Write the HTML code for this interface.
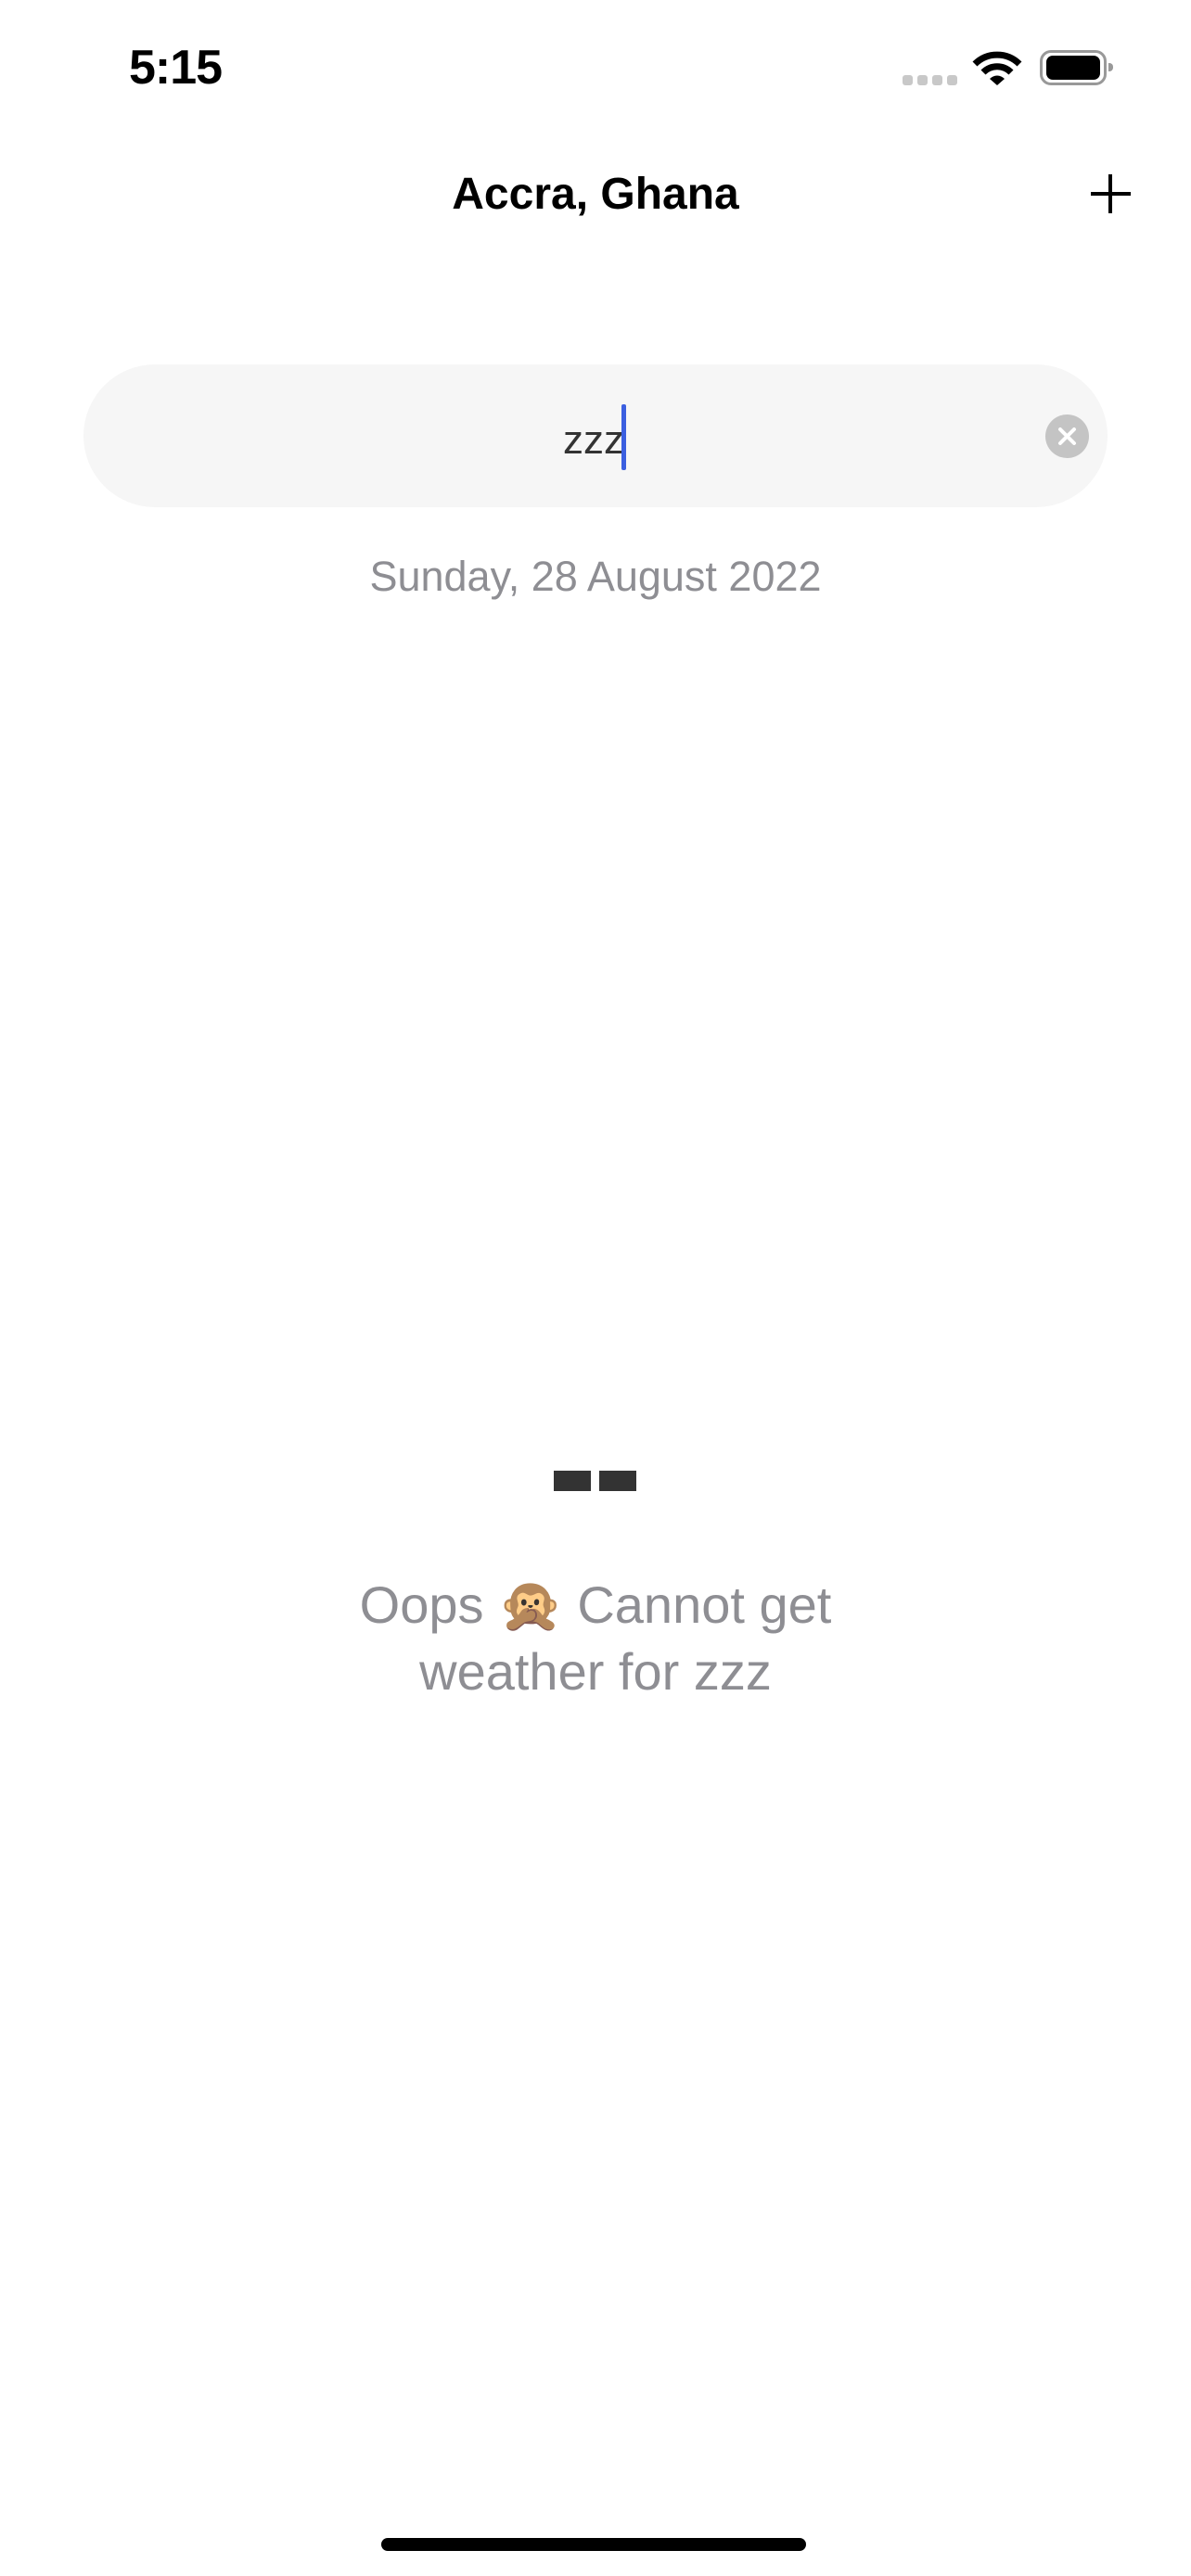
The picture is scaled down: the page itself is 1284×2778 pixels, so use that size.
<!DOCTYPE html>
<html><head><meta charset="utf-8"><style>
html,body{margin:0;padding:0;background:#fff;}
body{width:1284px;height:2778px;position:relative;overflow:hidden;font-family:"Liberation Sans",sans-serif;}
.a{position:absolute;}
</style></head><body>
<div class="a" style="left:139px;top:43px;font-size:52px;font-weight:bold;color:#000;letter-spacing:-1px;">5:15</div>
<div class="a" style="left:973px;top:81px;width:11px;height:11px;border-radius:3px;background:#c8c8c8"></div>
<div class="a" style="left:989px;top:81px;width:11px;height:11px;border-radius:3px;background:#c8c8c8"></div>
<div class="a" style="left:1005px;top:81px;width:11px;height:11px;border-radius:3px;background:#c8c8c8"></div>
<div class="a" style="left:1021px;top:81px;width:11px;height:11px;border-radius:3px;background:#c8c8c8"></div>
<svg class="a" style="left:1048px;top:53px" width="54" height="40" viewBox="0 0 54 40">
<path d="M3 16 A34 34 0 0 1 51 16" stroke="#000" stroke-width="7" fill="none"/>
<path d="M12 25 A21 21 0 0 1 42 25" stroke="#000" stroke-width="7" fill="none"/>
<path d="M19 32 L27 39 L35 32 A11 11 0 0 0 19 32Z" fill="#000"/>
</svg>
<div class="a" style="left:1121px;top:54px;width:66px;height:32px;border:3px solid #999;border-radius:12px;"></div>
<div class="a" style="left:1128px;top:60px;width:58px;height:26px;border-radius:7px;background:#000"></div>
<div class="a" style="left:1195px;top:68px;width:5px;height:9px;border-radius:0 4px 4px 0;background:#999"></div>

<div class="a" style="left:0;width:1284px;top:182px;text-align:center;font-size:48px;font-weight:bold;color:#000;">Accra, Ghana</div>
<div class="a" style="left:1176px;top:207px;width:43px;height:4px;background:#000"></div>
<div class="a" style="left:1195px;top:188px;width:4px;height:42px;background:#000"></div>

<div class="a" style="left:90px;top:393px;width:1104px;height:154px;border-radius:77px;background:#f6f6f6"></div>
<div class="a" style="left:607px;top:450px;font-size:44px;color:#333;">zzz</div>
<div class="a" style="left:670px;top:436px;width:5px;height:71px;border-radius:2px;background:#3b5fe0"></div>
<div class="a" style="left:1127px;top:447px;width:47px;height:47px;border-radius:50%;background:#c4c4c4"></div>
<svg class="a" style="left:1127px;top:447px" width="47" height="47" viewBox="0 0 47 47"><path d="M16 16 L31 31 M31 16 L16 31" stroke="#fff" stroke-width="4" stroke-linecap="round"/></svg>

<div class="a" style="left:0;width:1284px;top:596px;text-align:center;font-size:45px;color:#8e8e93;">Sunday, 28 August 2022</div>

<div class="a" style="left:597px;top:1586px;width:40px;height:22px;background:#333"></div>
<div class="a" style="left:646px;top:1586px;width:40px;height:22px;background:#333"></div>

<div class="a" style="left:0;width:1284px;top:1695px;text-align:center;font-size:56px;line-height:72px;color:#8e8e93;">Oops 🙊 Cannot get<br>weather for zzz</div>

<div class="a" style="left:411px;top:2737px;width:458px;height:14px;border-radius:7px;background:#000"></div>
</body></html>
